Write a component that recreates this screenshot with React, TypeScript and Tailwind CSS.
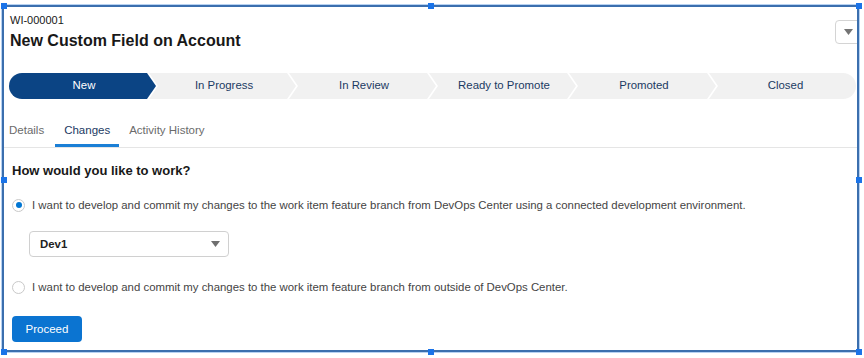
const STAGES = ["New", "In Progress", "In Review", "Ready to Promote", "Promoted", "Closed"];

function Radio({ checked }: { checked?: boolean }) {
  return (
    <span className="flex h-[13px] w-[13px] shrink-0 items-center justify-center rounded-full border border-[#c9c9c9] bg-white">
      {checked && <span className="h-[6px] w-[6px] rounded-full bg-[#0176d3]" />}
    </span>
  );
}

function Handle({ className }: { className: string }) {
  return <span className={"absolute h-[6px] w-[6px] bg-[#1a73e8] " + className} />;
}

export default function App() {
  return (
    <div className="relative h-[358px] w-[864px] overflow-hidden bg-white font-['Liberation_Sans',Arial,sans-serif]">
      {/* selection frame */}
      <div className="ml-[2px] mt-[5px] h-[347px] w-[857px] overflow-hidden border-2 border-[#3b6fae] shadow-[0_0_0_1px_#b7d2f2]">
        {/* header */}
        <div className="flex items-start justify-between pl-[6px] pt-[6px]">
          <div>
            <div className="text-[11px] leading-[14px] text-[#181818]">WI-000001</div>
            <h1 className="mt-[3px] text-[16px] font-bold leading-[22px] text-[#181818]">
              New Custom Field on Account
            </h1>
          </div>
          <button className="-mr-[4px] mt-[7px] flex h-[24px] w-[26px] items-center justify-center rounded-[4px] border border-[#d4d4d4] bg-white">
            <svg width="9" height="6" viewBox="0 0 9 6">
              <path d="M0 0h9L4.5 6z" fill="#747474" />
            </svg>
          </button>
        </div>

        {/* path */}
        <div className="ml-[5px] mr-[1px] mt-[21px] flex h-[26px] overflow-hidden rounded-full bg-white">
          {STAGES.map((s, i) => {
            const first = i === 0;
            const last = i === STAGES.length - 1;
            const clip = first
              ? "[clip-path:polygon(0_0,calc(100%_-_9px)_0,100%_50%,calc(100%_-_9px)_100%,0_100%)]"
              : last
              ? "[clip-path:polygon(0_0,100%_0,100%_100%,0_100%,9px_50%)]"
              : "[clip-path:polygon(0_0,calc(100%_-_9px)_0,100%_50%,calc(100%_-_9px)_100%,0_100%,9px_50%)]";
            return (
              <div
                key={s}
                className={
                  "flex flex-1 items-center justify-center text-[11.4px] " +
                  clip +
                  (first ? " bg-[#0b4484] text-white" : " -ml-[7px] bg-[#f1f1f1] text-[#1b3a63]")
                }
              >
                <span className={last ? "pl-[6px]" : "pl-[3px]"}>{s}</span>
              </div>
            );
          })}
        </div>

        {/* tabs */}
        <div className="mt-[23px] flex border-b border-[#e5e5e5] text-[11.5px]">
          <div className="pb-[8px] pl-[5px] pr-[11px] text-[#6b6b6b]">Details</div>
          <div className="border-b-[3px] border-[#1b7fd6] px-[9px] pb-[5px] text-[#1b3a63]">Changes</div>
          <div className="pb-[8px] pl-[10px] text-[#6b6b6b]">Activity History</div>
        </div>

        {/* body */}
        <div className="pl-[8px]">
          <h2 className="mt-[15px] text-[13px] font-bold leading-[16px] text-[#181818]">
            How would you like to work?
          </h2>

          <label className="mt-[19px] flex items-center gap-[7px] text-[11.4px] leading-[14px] text-[#444]">
            <Radio checked />
            I want to develop and commit my changes to the work item feature branch from DevOps Center using a connected
            development environment.
          </label>

          <div className="ml-[17px] mt-[19px] flex h-[26px] w-[200px] items-center justify-between rounded-[4px] border border-[#d0d0d0] pl-[10px] pr-[8px]">
            <span className="text-[11.4px] font-bold text-[#222]">Dev1</span>
            <svg width="9" height="6" viewBox="0 0 9 6">
              <path d="M0 0h9L4.5 6z" fill="#6f6f6f" />
            </svg>
          </div>

          <label className="mt-[23px] flex items-center gap-[7px] text-[11.4px] leading-[14px] text-[#444]">
            <Radio />
            I want to develop and commit my changes to the work item feature branch from outside of DevOps Center.
          </label>

          <button className="mt-[22px] h-[26px] w-[70px] rounded-[4px] bg-[#0b74d1] text-[11.5px] text-white">
            Proceed
          </button>
        </div>
      </div>

      <Handle className="left-[1px] top-[3px]" />
      <Handle className="left-[428px] top-[3px]" />
      <Handle className="left-[856px] top-[3px]" />
      <Handle className="left-[1px] top-[177px]" />
      <Handle className="left-[856px] top-[177px]" />
      <Handle className="left-[1px] top-[349px]" />
      <Handle className="left-[428px] top-[349px]" />
      <Handle className="left-[856px] top-[349px]" />
    </div>
  );
}
